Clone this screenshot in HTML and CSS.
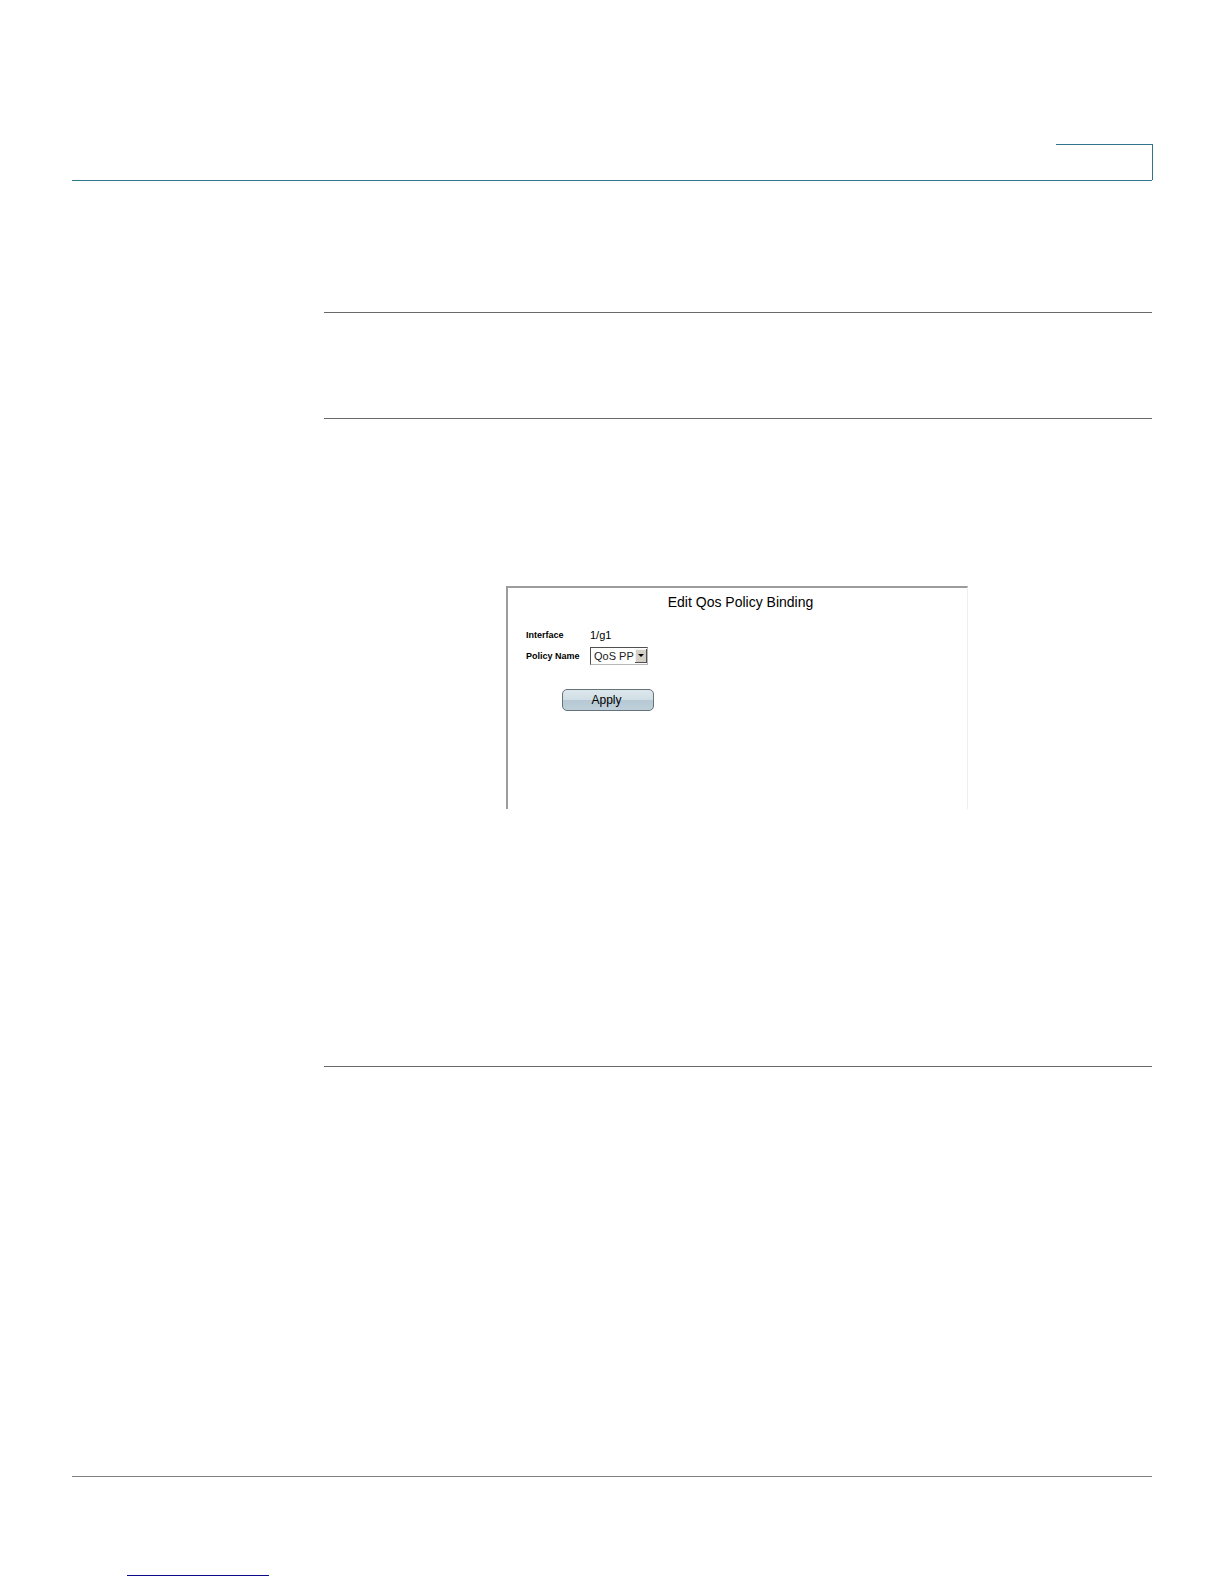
FILE: index.html
```
<!DOCTYPE html>
<html lang="en">
<head>
    <meta charset="UTF-8">
    <meta name="viewport" content="width=device-width, initial-scale=1.0">
    <title>Edit Qos Policy Binding</title>
    <link rel="stylesheet" href="styles.css">
</head>
<body>
    <div class="page">
        <header class="page-header">
            <div class="header-tab"></div>
        </header>
        <main class="content">
            <section class="step step-note"></section>
            <section class="step step-form">
                <form class="panel">
                    <h1 class="panel-title">Edit Qos Policy Binding</h1>
                    <div class="fields">
                        <span class="label">Interface</span>
                        <span class="value">1/g1</span>
                        <label class="label" for="policyName">Policy Name</label>
                        <div class="select-box">
                            <select id="policyName">
                                <option>QoS PP</option>
                            </select>
                            <svg class="arrow" viewBox="0 0 12 14" aria-hidden="true">
                                <rect width="12" height="14" fill="#d4d0c8"/>
                                <path d="M0 14V0h12v1H1v13z" fill="#f4f4f4"/>
                                <path d="M0 13h11V0h1v14H0z" fill="#505050"/>
                                <path d="M3 5h6L6 8z" fill="#000"/>
                            </svg>
                        </div>
                    </div>
                    <button class="apply" type="button">Apply</button>
                </form>
            </section>
            <section class="step step-end"></section>
        </main>
        <footer class="page-footer">
            <div class="footer-link"></div>
        </footer>
    </div>
</body>
</html>
```

FILE: styles.css
```
:root {
    --header-color: #31748a;
    --rule-color: #686868;
    --footer-color: #808080;
    --link-color: #0b0b8c;
}
body {
    background: white;
    color: black;
    font-family: "Liberation Sans", Arial, sans-serif;
    margin: 0;
}
.page {
    padding: 144px 72px 0;
}
.page-header {
    display: flex;
    justify-content: flex-end;
    border-bottom: 1px solid var(--header-color);
}
.header-tab {
    width: 96px;
    height: 35px;
    margin-right: -1px;
    border-top: 1px solid var(--header-color);
    border-right: 1px solid var(--header-color);
}
.content {
    margin: 131px 0 0 252px;
}
.step {
    border-top: 1px solid var(--rule-color);
}
.step-note {
    height: 105px;
}
.step-form {
    padding: 167px 0 257px;
}
.step-end {
    height: 409px;
}
.panel {
    box-sizing: border-box;
    width: 462px;
    min-height: 223px;
    margin-left: 182px;
    padding: 0 18px;
    border-top: 2px solid #9c9c9c;
    border-left: 2px solid #9c9c9c;
    border-right: 1px solid #eeeeee;
}
.panel-title {
    margin: 0;
    padding: 5px 0 0 6px;
    font-size: 14px;
    font-weight: normal;
    line-height: 18px;
    text-align: center;
}
.fields {
    display: grid;
    grid-template-columns: 64px auto;
    justify-content: start;
    align-items: center;
    row-gap: 3px;
    margin-top: 15px;
}
.label {
    font-size: 9px;
    font-weight: bold;
}
.value {
    font-size: 11px;
    line-height: 18px;
}
.select-box {
    position: relative;
    width: 58px;
    height: 18px;
}
.select-box select {
    appearance: none;
    box-sizing: border-box;
    display: block;
    width: 100%;
    height: 100%;
    padding: 0 13px 0 3px;
    background: white;
    border: 1px solid #b8b8b8;
    border-top-color: #505050;
    border-left-color: #505050;
    border-radius: 0;
    color: #202020;
    font-family: inherit;
    font-size: 11px;
}
.arrow {
    position: absolute;
    top: 2px;
    right: 1px;
    width: 12px;
    height: 14px;
    pointer-events: none;
}
.apply {
    display: block;
    width: 92px;
    height: 22px;
    margin: 24px 0 0 36px;
    padding: 0 3px 0 0;
    background: linear-gradient(#dce7ec, #d0dee5 50%, #b5c8d3 50%, #bfd0da);
    border: 1px solid #64727c;
    border-radius: 5px;
    color: black;
    font-family: inherit;
    font-size: 12px;
    cursor: pointer;
}
.page-footer {
    border-top: 1px solid var(--footer-color);
    padding: 98px 0 8px 55px;
}
.footer-link {
    width: 142px;
    border-top: 1px solid var(--link-color);
}
```
